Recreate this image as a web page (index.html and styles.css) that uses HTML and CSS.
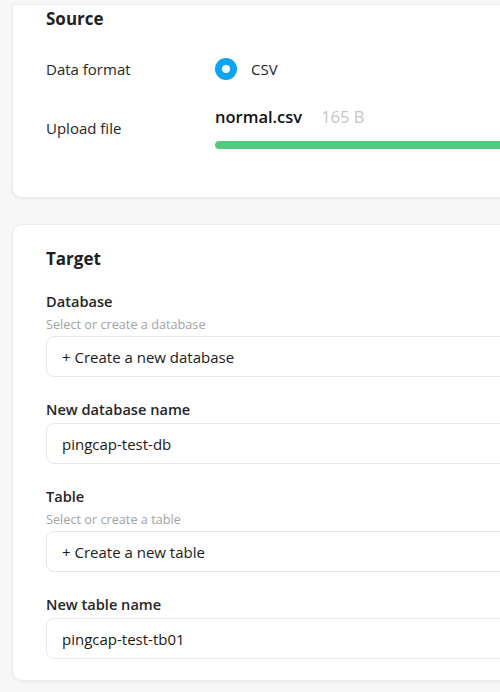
FILE: index.html
```html
<!DOCTYPE html>
<html>
<head>
<meta charset="utf-8">
<link rel="stylesheet" href="styles.css">
</head>
<body>
<div class="page">
  <section class="card card-source">
    <h2 class="card-title">Source</h2>
    <div class="form-row">
      <div class="row-label">Data format</div>
      <div class="row-value radio-group">
        <span class="radio"><span class="radio-dot"></span></span>
        <span class="radio-text">CSV</span>
      </div>
    </div>
    <div class="form-row">
      <div class="row-label">Upload file</div>
      <div class="row-value upload">
        <div class="file-line">
          <span class="file-name">normal.csv</span>
          <span class="file-size">165 B</span>
        </div>
        <div class="progress"><div class="progress-fill" style="width:100%"></div></div>
      </div>
    </div>
  </section>

  <section class="card card-target">
    <h2 class="card-title">Target</h2>
    <div class="field">
      <div class="field-label">Database</div>
      <div class="field-hint">Select or create a database</div>
      <div class="input">+ Create a new database</div>
    </div>
    <div class="field">
      <div class="field-label">New database name</div>
      <div class="input">pingcap-test-db</div>
    </div>
    <div class="field">
      <div class="field-label">Table</div>
      <div class="field-hint">Select or create a table</div>
      <div class="input">+ Create a new table</div>
    </div>
    <div class="field">
      <div class="field-label">New table name</div>
      <div class="input">pingcap-test-tb01</div>
    </div>
  </section>
</div>
</body>
</html>
```

FILE: styles.css
```css
html, body {
  margin: 0;
  padding: 0;
  background: #f7f7f7;
  overflow: hidden;
}
body {
  font-family: "Open Sans", "Noto Sans", sans-serif;
  color: #262626;
  width: 500px;
  height: 692px;
}
.page {
  display: flex;
  flex-direction: column;
  gap: 26px;
  padding: 4px 0 0 12px;
}
.card {
  width: 600px;
  background: #fff;
  border: 1px solid #ececec;
  border-radius: 10px;
  box-shadow: 0 1px 3px rgba(0, 0, 0, 0.06);
  padding: 0 0 0 33px;
  box-sizing: border-box;
}
.card-source {
  border-top-left-radius: 0;
  border-top-right-radius: 0;
  padding-top: 2px;
  padding-bottom: 48px;
}
.card-target {
  padding-top: 22px;
  padding-bottom: 21px;
}
.card-title {
  margin: 0;
  font-size: 17px;
  line-height: 24px;
  font-weight: 700;
  color: #1f1f1f;
}
.form-row {
  display: flex;
  align-items: center;
}
.card-source .form-row:nth-of-type(1) {
  margin-top: 26px;
  height: 24px;
}
.card-source .form-row + .form-row {
  margin-top: 25px;
}
.row-label {
  width: 169px;
  font-size: 15px;
  line-height: 20px;
  color: #262626;
}
.radio-group {
  display: flex;
  align-items: center;
  gap: 14px;
}
.radio {
  width: 22px;
  height: 22px;
  border-radius: 50%;
  background: #0ea5f0;
  display: flex;
  align-items: center;
  justify-content: center;
}
.radio-dot {
  width: 8px;
  height: 8px;
  border-radius: 50%;
  background: #fff;
}
.radio-text {
  font-size: 15px;
  line-height: 20px;
  color: #1f1f1f;
}
.upload {
  flex: 1;
  display: flex;
  flex-direction: column;
  gap: 13px;
}
.file-line {
  display: flex;
  align-items: baseline;
  gap: 19px;
  line-height: 22px;
}
.file-name {
  font-size: 16.5px;
  font-weight: 600;
  color: #111;
}
.file-size {
  font-size: 16.5px;
  color: #c6c6c6;
}
.progress {
  height: 8px;
  border-radius: 4px;
  background: #eee;
  overflow: hidden;
}
.progress-fill {
  height: 100%;
  background: #52c97b;
  border-radius: 4px;
}
.field {
  display: flex;
  flex-direction: column;
}
.card-target .card-title + .field {
  margin-top: 20px;
}
.field + .field {
  margin-top: 22px;
}
.field-label {
  font-size: 14.6px;
  line-height: 20px;
  font-weight: 600;
  color: #262626;
  margin-bottom: 4px;
}
.field-hint {
  font-size: 12.7px;
  line-height: 16px;
  color: #a3a3a3;
  margin-top: 1px;
  margin-bottom: 4px;
}
.input {
  height: 41px;
  box-sizing: border-box;
  border: 1px solid #e6e6e6;
  border-radius: 8px;
  padding: 0 15px;
  display: flex;
  align-items: center;
  font-size: 15px;
  color: #1a1a1a;
}
```
